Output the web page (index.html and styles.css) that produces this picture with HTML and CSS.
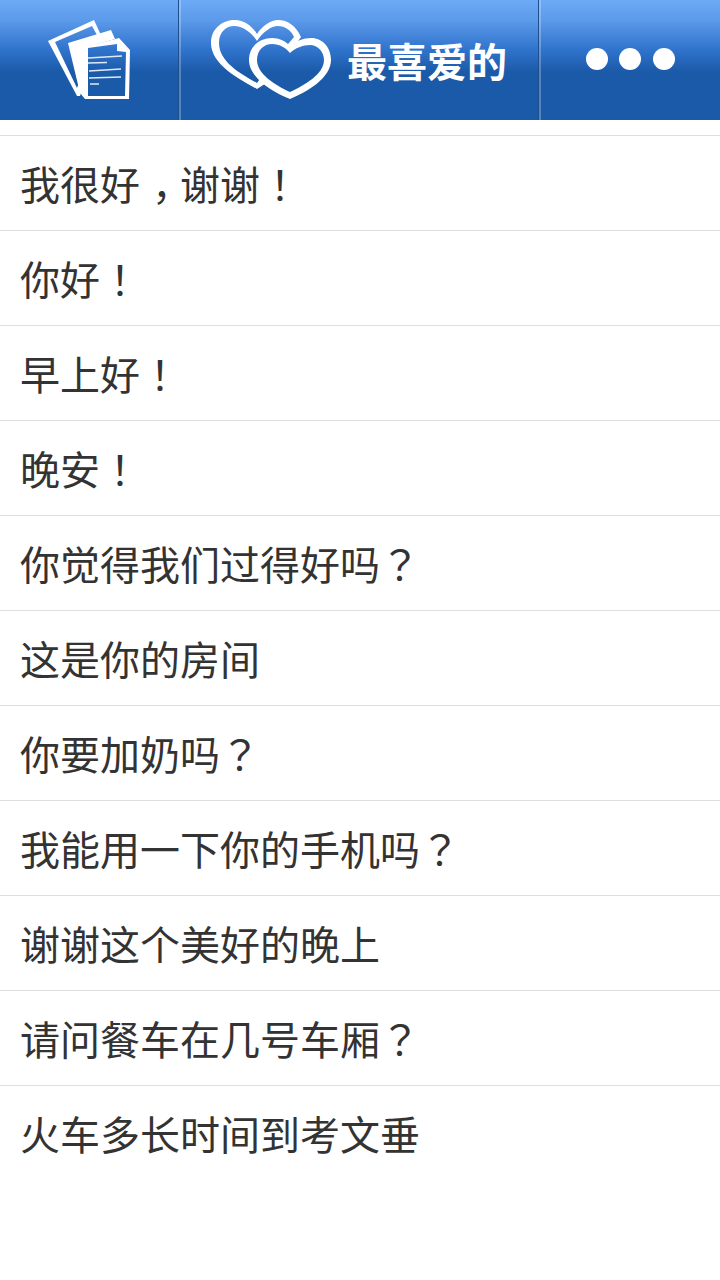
FILE: index.html
```html
<!DOCTYPE html>
<html lang="zh-CN">
<head>
    <meta charset="UTF-8">
    <title>最喜爱的</title>
    <link rel="stylesheet" href="styles.css">
</head>
<body>

<header class="topbar">
    <!--短语-->
    <a class="topbar__cell topbar__cell--docs">
        <svg class="icon-docs" width="84" height="82" viewBox="0 0 84 82">
            <defs>
                <linearGradient id="bar-docs" gradientUnits="userSpaceOnUse" x1="0" y1="-19" x2="0" y2="101">
                    <stop offset="0" stop-color="#6dabf7"/>
                    <stop offset="0.167" stop-color="#5c9aea"/>
                    <stop offset="0.417" stop-color="#2f73cc"/>
                    <stop offset="0.6" stop-color="#1b5aa8"/>
                </linearGradient>
            </defs>
            <path d="M1 22 L47 1 L53 14 L33 77 L30 77 Z" fill="#fff"/>
            <path d="M8 23 L45 7 L50 16 L30 69 Z" fill="url(#bar-docs)"/>
            <path d="M21 24 L64 11 L68 20 L40 28 L38 80 L33 74 Z" fill="#fff"/>
            <path d="M38 28 L72 19 L83 31 L82 80 L38 80 Z" fill="#fff"/>
            <path d="M41 29 L70 25 L70 32 L79 33 L78 77 L41 77 Z" fill="url(#bar-docs)"/>
            <path d="M41 39 L75 37 M41 44 L60 43.5 M42 52 L74 50 M42 59 L74 58 M43 65 L52 65" stroke="#dfe9f6" stroke-width="1.6" fill="none"/>
        </svg>
    </a>
    <!--最喜爱的-->
    <a class="topbar__cell topbar__cell--title">
        <svg class="icon-hearts" width="120" height="80" viewBox="0 0 120 80">
            <defs>
                <linearGradient id="bar-hearts" gradientUnits="userSpaceOnUse" x1="0" y1="-20" x2="0" y2="100">
                    <stop offset="0" stop-color="#6dabf7"/>
                    <stop offset="0.167" stop-color="#5c9aea"/>
                    <stop offset="0.417" stop-color="#2f73cc"/>
                    <stop offset="0.6" stop-color="#1b5aa8"/>
                </linearGradient>
            </defs>
            <path fill="#fff" fill-rule="evenodd" d="M46 69 C30 60 0 45 0 23 C0 8 12 0 24 0 C33 0 41 6 46 14 C51 6 60 0 67 0 C77 0 85 6 90 17 L60 60 Z
                M46 63 C30 54 8 42 8 23 C8 12 15 6 23 6 C32 6 41 13 46 21 C52 12 60 6 67 6 C74 6 80 10 83 17 L55 50 Z"/>
            <path fill="#fff" d="M79 79 C62 72 38 58 38 40 C38 26 49 18 61 18 C68 18 75 21 79 26 C84 21 93 18 100 18 C112 18 120 28 120 40 C120 58 96 72 79 79 Z"/>
            <path fill="url(#bar-hearts)" d="M79 72 C64 65 46 54 46 40 C46 30 53 24 61 24 C69 24 75 28 79 33 C84 28 92 25 99 25 C107 25 113 32 113 40 C113 54 94 65 79 72 Z"/>
        </svg>
        <span class="topbar__title">最喜爱的</span>
    </a>
    <!--更多-->
    <a class="topbar__cell topbar__cell--more">
        <span class="dot"></span>
        <span class="dot"></span>
        <span class="dot"></span>
    </a>
</header>

<ul class="phrases">
    <li class="phrases__item">我很好<span class="comma">，</span>谢谢<span class="punct" lang="zh-TW">！</span></li>
    <li class="phrases__item">你好<span class="punct" lang="zh-TW">！</span></li>
    <li class="phrases__item">早上好<span class="punct" lang="zh-TW">！</span></li>
    <li class="phrases__item">晚安<span class="punct" lang="zh-TW">！</span></li>
    <li class="phrases__item">你觉得我们过得好吗<span class="punct" lang="zh-TW">？</span></li>
    <li class="phrases__item">这是你的房间</li>
    <li class="phrases__item">你要加奶吗<span class="punct" lang="zh-TW">？</span></li>
    <li class="phrases__item">我能用一下你的手机吗<span class="punct" lang="zh-TW">？</span></li>
    <li class="phrases__item">谢谢这个美好的晚上</li>
    <li class="phrases__item">请问餐车在几号车厢<span class="punct" lang="zh-TW">？</span></li>
    <li class="phrases__item">火车多长时间到考文垂</li>
</ul>

</body>
</html>
```

FILE: styles.css
```css
* {
    border: 0;
    box-sizing: border-box;
    margin: 0;
    padding: 0;
}

body {
    background-color: #fff;
    color: #333;
    font-family: "Noto Sans CJK SC", "Noto Sans", sans-serif;
    height: 1280px;
    overflow: hidden;
}

.topbar {
    background: linear-gradient(#6dabf7 0, #5c9aea 20px, #2f73cc 50px, #1b5aa8 72px, #1b5aa8 120px);
    display: flex;
    height: 120px;
}

.topbar__cell {
    align-items: center;
    display: flex;
    height: 120px;
}

.topbar__cell--docs {
    justify-content: center;
    width: 178px;
}

.topbar__cell--title,
.topbar__cell--more {
    border-left: 1px solid #1d4f8f;
    box-shadow: inset 2px 0 0 rgba(255, 255, 255, 0.25);
}

.topbar__cell--title {
    gap: 16px;
    padding-left: 32px;
    width: 360px;
}

.topbar__cell--more {
    flex: 1;
    gap: 11.5px;
    justify-content: center;
    padding: 0 0 2px 1px;
}

.topbar__title {
    color: #fff;
    font-size: 40px;
    font-weight: 700;
    line-height: 1;
}

.dot {
    background-color: #fff;
    border-radius: 50%;
    display: block;
    height: 22px;
    width: 22px;
}

.phrases {
    list-style: none;
    padding-top: 15px;
}

.phrases__item {
    border-top: 1px solid #ddd;
    font-size: 40px;
    height: 95px;
    line-height: 94px;
    padding-left: 20px;
    white-space: nowrap;
}

/* 标点居中 */
.punct {
    font-family: "Noto Sans CJK TC", sans-serif;
}

.comma {
    letter-spacing: -12px;
    padding-left: 12px;
}
```
